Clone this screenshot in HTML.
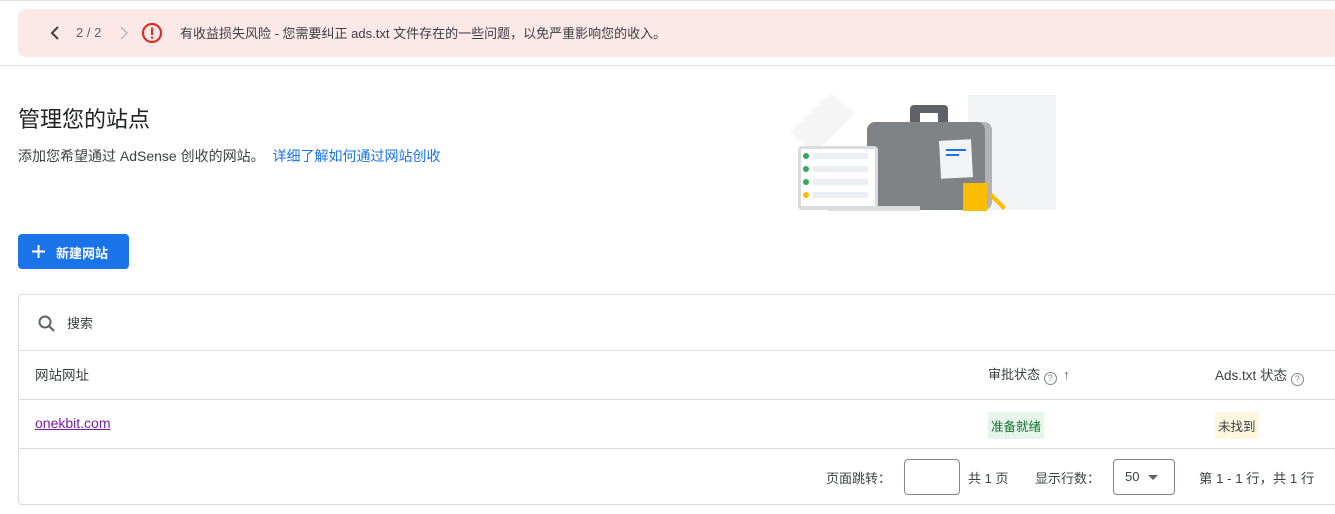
<!DOCTYPE html><html><head><meta charset="utf-8"><style>
body{margin:0;width:1335px;height:514px;overflow:hidden;background:#fff;font-family:"Liberation Sans","Noto Sans CJK SC",sans-serif;color:#3c4043;position:relative}
.a{position:absolute}
.banner{left:18px;top:9px;width:1340px;height:48px;background:#fce8e6;border-radius:8px}
.t{font-size:13px;white-space:nowrap}
.box{left:18px;top:294px;width:1340px;height:211px;border:1px solid #dadce0;border-radius:4px;box-sizing:border-box}
.hl{position:absolute;left:0;right:0;height:1px;background:#dadce0}
</style></head><body>
<div class="a" style="left:0;right:0;top:0;height:1px;background:#e0e0e0"></div>
<div class="a banner"></div>
<svg class="a" style="left:48px;top:25px" width="14" height="16" viewBox="0 0 14 16"><path d="M10 2L4 8l6 6" stroke="#3c4043" stroke-width="2" fill="none"/></svg>
<div class="a t" style="left:76px;top:25px;color:#5f6368">2 / 2</div>
<svg class="a" style="left:117px;top:25px" width="14" height="16" viewBox="0 0 14 16"><path d="M4 2l6 6-6 6" stroke="#bdbdbd" stroke-width="1.6" fill="none"/></svg>
<svg class="a" style="left:141px;top:22px" width="22" height="22" viewBox="0 0 22 22"><circle cx="11" cy="11" r="9" stroke="#d93025" stroke-width="2.2" fill="none"/><rect x="10" y="5.5" width="2.2" height="7.5" fill="#d93025"/><rect x="10" y="14.5" width="2.2" height="2.2" fill="#d93025"/></svg>
<div class="a t" style="left:180px;top:23px;font-size:13px">有收益损失风险 - 您需要纠正 ads.txt 文件存在的一些问题，以免严重影响您的收入。</div>
<div class="a" style="left:0;right:0;top:65px;height:1px;background:#dadce0"></div>
<div class="a" style="left:18px;top:102px;font-size:22px;color:#202124">管理您的站点</div>
<div class="a t" style="left:18px;top:146px;font-size:14px">添加您希望通过 AdSense 创收的网站。 <span style="color:#1a73e8;margin-left:4px">详细了解如何通过网站创收</span></div>
<svg class="a" style="left:770px;top:88px" width="300" height="125" viewBox="0 0 300 125">
<rect x="198" y="7" width="88" height="115" fill="#f1f3f4"/>
<path d="M20 45L60 5l25 20-40 40z" fill="#f5f5f5"/>
<rect x="140" y="17" width="38" height="22" rx="4" fill="#5f6368"/><rect x="150" y="25" width="18" height="10" fill="#fff"/>
<rect x="97" y="34" width="125" height="88" rx="8" fill="#b0b3b5"/>
<rect x="97" y="34" width="118" height="88" rx="8" fill="#7f8385"/>
<rect x="170" y="52" width="32" height="38" fill="#f1f3f4" transform="rotate(-3 186 71)"/>
<rect x="176" y="61" width="20" height="2" fill="#1a73e8"/><rect x="176" y="66" width="13" height="2" fill="#1a73e8"/>
<rect x="193" y="95" width="24" height="28" fill="#fbbc04"/>
<path d="M222 105l14 14-3 3-14-14z" fill="#fbbc04"/>
<rect x="28" y="58" width="80" height="64" rx="4" fill="#dadce0"/><rect x="31" y="61" width="74" height="57" fill="#fff"/>
<circle cx="36" cy="68" r="3" fill="#34a853"/><rect x="43" y="65" width="55" height="6" fill="#eceff1"/>
<circle cx="36" cy="81" r="3" fill="#34a853"/><rect x="43" y="78" width="55" height="6" fill="#eceff1"/>
<circle cx="36" cy="94" r="3" fill="#34a853"/><rect x="43" y="91" width="55" height="6" fill="#eceff1"/>
<circle cx="36" cy="107" r="3" fill="#fbbc04"/><rect x="43" y="104" width="55" height="6" fill="#eceff1"/>
<rect x="58" y="118" width="92" height="5" fill="#dadce0"/>
</svg>
<div class="a" style="left:18px;top:234px;width:111px;height:35px;background:#1a73e8;border-radius:4px;color:#fff;font-size:13px;font-weight:bold"><svg class="a" style="left:14px;top:11px" width="13" height="13" viewBox="0 0 13 13"><path d="M6.5 0v13M0 6.5h13" stroke="#fff" stroke-width="2"/></svg><span style="position:absolute;left:38px;top:9px">新建网站</span></div>
<div class="a box">
<svg class="a" style="left:18px;top:19px" width="20" height="20" viewBox="0 0 20 20"><circle cx="8" cy="8" r="5.5" stroke="#5f6368" stroke-width="2" fill="none"/><path d="M12 12l5 5" stroke="#5f6368" stroke-width="2.2"/></svg>
<div class="a t" style="left:48px;top:18px">搜索</div>
<div class="hl" style="top:55px"></div>
<div class="a t" style="left:16px;top:69px;font-size:13.5px">网站网址</div>
<div class="a t" style="left:969px;top:69px">审批状态 <span style="display:inline-block;width:11px;height:11px;border:1.5px solid #80868b;border-radius:50%;font-size:9px;line-height:11px;text-align:center;color:#80868b;vertical-align:-2px">?</span> <span style="color:#5f6368;margin-left:3px;font-weight:bold">↑</span></div>
<div class="a t" style="left:1196px;top:69px;font-size:13.5px">Ads.txt 状态 <span style="display:inline-block;width:11px;height:11px;border:1.5px solid #80868b;border-radius:50%;font-size:9px;line-height:11px;text-align:center;color:#80868b;vertical-align:-2px">?</span></div>
<div class="hl" style="top:104px"></div>
<div class="a t" style="left:16px;top:120px;color:#7b1fa2;text-decoration:underline;font-size:14px">onekbit.com</div>
<div class="a t" style="left:969px;top:117px;background:#e6f4ea;color:#137333;padding:4px 3px;border-radius:2px;font-size:12.5px">准备就绪</div>
<div class="a t" style="left:1196px;top:117px;background:#fef7e0;padding:4px 3px;border-radius:2px;font-size:12.5px">未找到</div>
<div class="hl" style="top:153px"></div>
<div class="a t" style="left:807px;top:173px">页面跳转：</div>
<div class="a" style="left:885px;top:164px;width:54px;height:34px;border:1px solid #80868b;border-radius:4px"></div>
<div class="a t" style="left:949px;top:173px">共 1 页</div>
<div class="a t" style="left:1016px;top:173px">显示行数：</div>
<div class="a" style="left:1094px;top:164px;width:60px;height:34px;border:1px solid #80868b;border-radius:4px"><span class="a t" style="left:11px;top:9px">50</span><span class="a" style="left:34px;top:15px;border:5px solid transparent;border-top-color:#5f6368"></span></div>
<div class="a t" style="left:1180px;top:173px;font-size:13.3px">第 1 - 1 行，共 1 行</div>
</div>
</body></html>
